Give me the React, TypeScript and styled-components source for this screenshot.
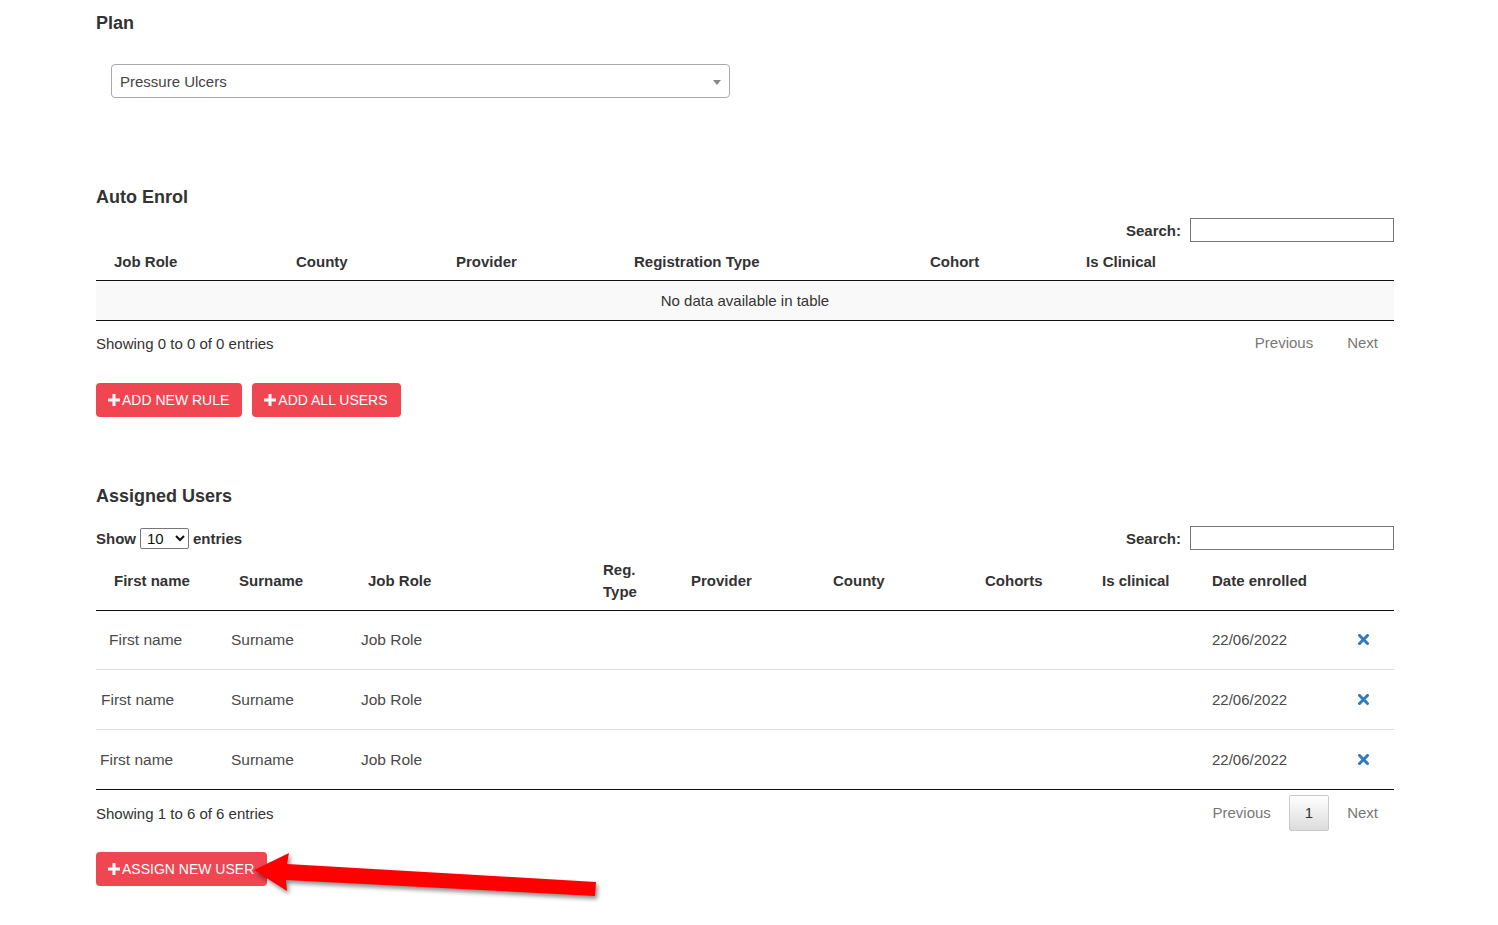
import React from "react";
import styled, { createGlobalStyle } from "styled-components";

const Global = createGlobalStyle`
  html, body { margin: 0; padding: 0; background: #fff; }
  body { font-family: "Liberation Sans", Arial, sans-serif; color: #333; font-size: 15px; }
  * { box-sizing: border-box; }
`;

const Root = styled.div`
  position: relative;
  width: 1498px;
  min-height: 925px;
  overflow: hidden;
`;

const Page = styled.div`
  width: 1298px;
  margin-left: 96px;
  padding-top: 13px;
  padding-bottom: 40px;
`;

const Heading = styled.h3<{ $mt: number }>`
  margin: ${(p) => p.$mt}px 0 0;
  font-size: 18px;
  line-height: 20px;
  font-weight: 700;
  color: #333;
`;

const FakeSelect = styled.div`
  margin: 31px 0 0 15px;
  width: 619px;
  height: 34px;
  border: 1px solid #aaa;
  border-radius: 4px;
  display: flex;
  align-items: center;
  justify-content: space-between;
  padding: 0 8px 0 8px;
  font-size: 15px;
  color: #444;
`;

const Caret = styled.span`
  width: 0;
  height: 0;
  border-style: solid;
  border-width: 5px 4px 0 4px;
  border-color: #888 transparent transparent transparent;
  margin-top: 2px;
`;

const ControlsRow = styled.div<{ $mt: number }>`
  margin-top: ${(p) => p.$mt}px;
  height: 24px;
  display: flex;
  align-items: center;
  justify-content: space-between;
`;

const Label = styled.label`
  display: flex;
  align-items: center;
  gap: 5px;
  font-size: 15px;
  font-weight: 700;
  color: #333;
`;

const SearchLabel = styled(Label)`
  margin-left: auto;
  gap: 9px;
`;

const SearchInput = styled.input`
  width: 204px;
  height: 24px;
  border: 1px solid #767676;
  border-radius: 0;
  padding: 1px 4px;
  font-family: inherit;
  font-size: 15px;
`;

const LengthSelect = styled.select`
  width: 49px;
  height: 21px;
  font-family: "Liberation Sans", Arial, sans-serif;
  font-size: 15px;
  padding: 0 0 0 2px;
  border: 1px solid #767676;
  border-radius: 2px;
  background: #fff;
  color: #111;
  margin: 0 -1px;
`;

const Table = styled.table`
  width: 1298px;
  border-collapse: collapse;
  table-layout: fixed;
  font-size: 15px;
`;

const Th = styled.th`
  text-align: left;
  font-weight: 700;
  color: #333;
  padding: 9px 18px 7px;
  line-height: 22px;
  vertical-align: middle;
  border-bottom: 1px solid #111;
`;

const EmptyCell = styled.td`
  background: #f9f9f9;
  text-align: center;
  padding: 9px 10px 8px;
  line-height: 22px;
  color: #333;
  border-bottom: 1px solid #111;
`;

const Tr = styled.tr<{ $last?: boolean; $h: number }>`
  & > td {
    height: ${(p) => p.$h}px;
    border-bottom: 1px solid ${(p) => (p.$last ? "#111" : "#ddd")};
  }
`;

const Td = styled.td<{ $pl?: number; $center?: boolean }>`
  padding: 0 8px 0 ${(p) => (p.$pl ?? 10)}px;
  line-height: 22px;
  font-size: 15.5px;
  color: #4a4a4a;
  vertical-align: middle;
  text-align: ${(p) => (p.$center ? "center" : "left")};
`;

const DateCell = styled(Td)`
  font-size: 15px;
`;

const InfoRow = styled.div<{ $mt: number }>`
  margin-top: ${(p) => p.$mt}px;
  height: 36px;
  display: flex;
  align-items: center;
  justify-content: space-between;
`;

const InfoText = styled.div`
  font-size: 15px;
  color: #333;
`;

const Pager = styled.div`
  display: flex;
  align-items: center;
`;

const PageBtn = styled.span<{ $current?: boolean }>`
  display: inline-block;
  margin-left: 2px;
  padding: 6px 15px;
  line-height: 22px;
  font-size: 15px;
  border: 1px solid ${(p) => (p.$current ? "#cacaca" : "transparent")};
  border-radius: 2px;
  color: ${(p) => (p.$current ? "#333" : "#777")};
  background: ${(p) =>
    p.$current ? "linear-gradient(to bottom, #fff 0%, #dcdcdc 100%)" : "transparent"};
`;

const ButtonRow = styled.div<{ $mt: number }>`
  margin-top: ${(p) => p.$mt}px;
  display: flex;
  gap: 10px;
`;

const RedButton = styled.button`
  height: 34px;
  padding: 0 13px 0 12px;
  border: none;
  border-radius: 4px;
  background: #ef4651;
  color: #fff;
  font-family: "Liberation Sans", Arial, sans-serif;
  font-size: 14px;
  display: inline-flex;
  align-items: center;
  gap: 2px;
  text-transform: uppercase;
  cursor: pointer;
`;

const Overlay = styled.svg`
  position: absolute;
  left: 0;
  top: 0;
  width: 1498px;
  height: 925px;
  pointer-events: none;
  filter: drop-shadow(2px 3px 2px rgba(0, 0, 0, 0.45));
`;

const PlusIcon = () => (
  <svg width="12" height="12" viewBox="0 0 12 12">
    <path d="M4.5 0h3v4.5H12v3H7.5V12h-3V7.5H0v-3h4.5z" fill="#fff" />
  </svg>
);

const RemoveIcon = () => (
  <svg width="11" height="11" viewBox="0 0 11 11">
    <path
      d="M1.5 1.5L9.5 9.5M9.5 1.5L1.5 9.5"
      stroke="#337ab7"
      strokeWidth="3"
      strokeLinecap="square"
    />
  </svg>
);

const autoCols = [182, 160, 178, 296, 156, 326];
const autoHeads = ["Job Role", "County", "Provider", "Registration Type", "Cohort", "Is Clinical"];

const userCols = [125, 129, 235, 88, 142, 152, 117, 110, 136, 64];
const userHeads = [
  "First name",
  "Surname",
  "Job Role",
  "Reg. Type",
  "Provider",
  "County",
  "Cohorts",
  "Is clinical",
  "Date enrolled",
  "",
];

const rows = [
  { indent: 13, h: 59, date: "22/06/2022" },
  { indent: 5, h: 60, date: "22/06/2022" },
  { indent: 4, h: 60, date: "22/06/2022" },
];

export default function App() {
  return (
    <Root>
      <Global />
      <Page>
        <Heading $mt={0}>Plan</Heading>
        <FakeSelect>
          <span>Pressure Ulcers</span>
          <Caret />
        </FakeSelect>

        <Heading $mt={89}>Auto Enrol</Heading>
        <ControlsRow $mt={11}>
          <SearchLabel>
            Search:
            <SearchInput type="search" />
          </SearchLabel>
        </ControlsRow>
        <Table>
          <colgroup>
            {autoCols.map((w, i) => (
              <col key={i} style={{ width: w }} />
            ))}
          </colgroup>
          <thead>
            <tr>
              {autoHeads.map((h) => (
                <Th key={h}>{h}</Th>
              ))}
            </tr>
          </thead>
          <tbody>
            <tr>
              <EmptyCell colSpan={6}>No data available in table</EmptyCell>
            </tr>
          </tbody>
        </Table>
        <InfoRow $mt={4}>
          <InfoText>Showing 0 to 0 of 0 entries</InfoText>
          <Pager>
            <PageBtn>Previous</PageBtn>
            <PageBtn>Next</PageBtn>
          </Pager>
        </InfoRow>
        <ButtonRow $mt={22}>
          <RedButton>
            <PlusIcon />
            Add new rule
          </RedButton>
          <RedButton>
            <PlusIcon />
            Add all users
          </RedButton>
        </ButtonRow>

        <Heading $mt={69}>Assigned Users</Heading>
        <ControlsRow $mt={20}>
          <Label>
            Show
            <LengthSelect defaultValue="10">
              <option value="10">10</option>
              <option value="25">25</option>
              <option value="50">50</option>
              <option value="100">100</option>
            </LengthSelect>
            entries
          </Label>
          <SearchLabel>
            Search:
            <SearchInput type="search" />
          </SearchLabel>
        </ControlsRow>
        <Table>
          <colgroup>
            {userCols.map((w, i) => (
              <col key={i} style={{ width: w }} />
            ))}
          </colgroup>
          <thead>
            <tr>
              {userHeads.map((h, i) => (
                <Th key={i}>{h}</Th>
              ))}
            </tr>
          </thead>
          <tbody>
            {rows.map((r, i) => (
              <Tr key={i} $h={r.h} $last={i === rows.length - 1}>
                <Td $pl={r.indent}>First name</Td>
                <Td>Surname</Td>
                <Td $pl={11}>Job Role</Td>
                <Td />
                <Td />
                <Td />
                <Td />
                <Td />
                <DateCell $pl={18}>{r.date}</DateCell>
                <Td $center>
                  <RemoveIcon />
                </Td>
              </Tr>
            ))}
          </tbody>
        </Table>
        <InfoRow $mt={5}>
          <InfoText>Showing 1 to 6 of 6 entries</InfoText>
          <Pager>
            <PageBtn>Previous</PageBtn>
            <PageBtn $current>1</PageBtn>
            <PageBtn>Next</PageBtn>
          </Pager>
        </InfoRow>
        <ButtonRow $mt={21}>
          <RedButton>
            <PlusIcon />
            Assign new user
          </RedButton>
        </ButtonRow>
      </Page>
      <Overlay viewBox="0 0 1498 925">
        <polygon
          points="254,870 289,853 287,864 596,882 595,896 286,880 287,891"
          fill="#ff0000"
        />
      </Overlay>
    </Root>
  );
}
